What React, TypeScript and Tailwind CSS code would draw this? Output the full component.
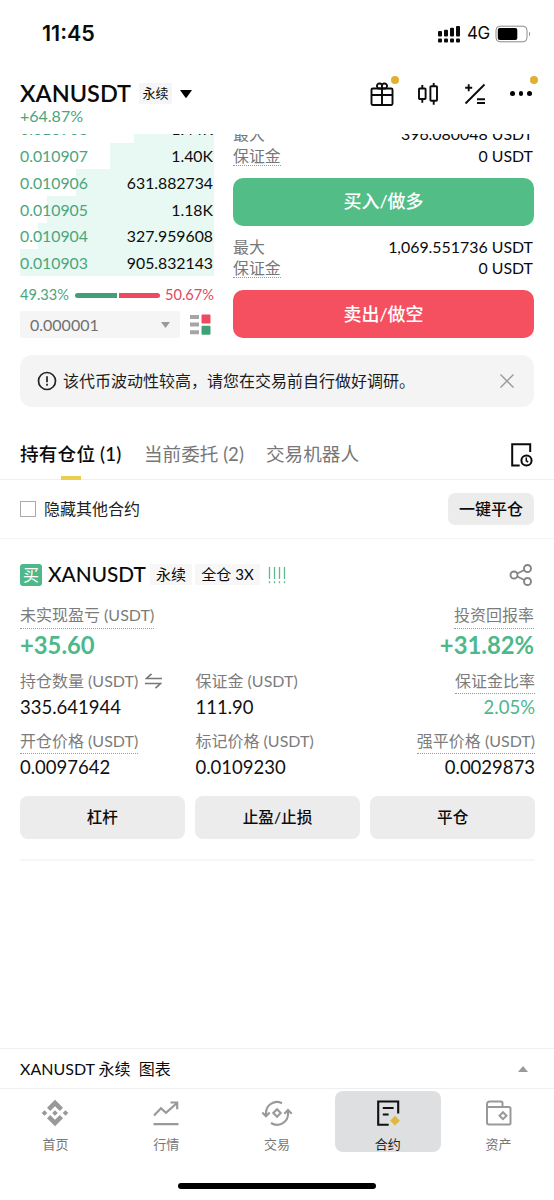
import React from "react";
import clsx from "clsx";

const bids = [
  { price: "0.010908", amount: "1.44K", bar: "w-[80px]" },
  { price: "0.010907", amount: "1.40K", bar: "w-[104px]" },
  { price: "0.010906", amount: "631.882734", bar: "w-[138px]" },
  { price: "0.010905", amount: "1.18K", bar: "w-[167px]" },
  { price: "0.010904", amount: "327.959608", bar: "w-[176px]" },
  { price: "0.010903", amount: "905.832143", bar: "w-[194px]" },
];

const giftIcon = (
  <svg width="26" height="26" viewBox="0 0 26 26" fill="none" stroke="#0b0b0b" strokeWidth="1.9">
    <rect x="2.5" y="7.5" width="21" height="16.5" rx="1.2" />
    <path d="M2.5 14h21M13 7.5V24" />
    <path d="M13 7.5H9.7a2.6 2.6 0 1 1 3.3-3.3 2.6 2.6 0 1 1 3.3 3.3H13V4.2" />
  </svg>
);

const candleIcon = (
  <svg width="22" height="24" viewBox="0 0 22 24" fill="none" stroke="#0b0b0b" strokeWidth="1.9">
    <rect x="2" y="6.5" width="6.6" height="10.5" rx="0.8" />
    <path d="M5.3 3v3.5M5.3 17v3.7" />
    <rect x="13.4" y="4.3" width="6.6" height="14.4" rx="0.8" />
    <path d="M16.7 1v3.3M16.7 18.7v4" />
  </svg>
);

const calcIcon = (
  <svg width="22" height="22" viewBox="0 0 22 22" fill="none" stroke="#0b0b0b" strokeWidth="1.9">
    <path d="M1.2 4.7h7M4.7 1.2v7M1.5 20.5 20.5 1.5M13 16.2h8M13 20h8" />
  </svg>
);

const homeIcon = (
  <svg width="28" height="28" viewBox="0 0 28 28" fill="#999">
    <path d="m14 .8 8 8-3.2 3.2-4.8-4.8L9.2 12 6 8.8zM14 27.2l8-8-3.2-3.2-4.8 4.8L9.2 16 6 19.2z" />
    <path d="m14 11.2 2.8 2.8-2.8 2.8-2.8-2.8zM3.5 11.2 6.3 14l-2.8 2.8L.7 14zM24.5 11.2l2.8 2.8-2.8 2.8-2.8-2.8z" />
  </svg>
);

const marketIcon = (
  <svg width="28" height="28" viewBox="0 0 28 28" fill="none" stroke="#999" strokeWidth="2.2">
    <path d="m2 16.5 7-7.3 5 4.6L25 4M18.5 3.5h6.7v6.7M1.5 25.2h25" />
  </svg>
);

const tradeIcon = (
  <svg width="32" height="28" viewBox="0 0 32 28" fill="none" stroke="#999" strokeWidth="2.1">
    <path d="M21 4.2A11 11 0 0 0 5 14v3M1.3 13.5 5 17.2l3.7-3.7" />
    <path d="M10 24a11 11 0 0 0 17-9.8v-3M23.3 14.7 27 11l3.7 3.7" />
    <path d="m16 10.3 3.7 3.7-3.7 3.7-3.7-3.7z" />
  </svg>
);

const futuresIcon = (
  <svg width="28" height="28" viewBox="0 0 28 28" fill="none" stroke="#111" strokeWidth="2.1">
    <path d="M24.2 14.5V2.5h-20v23.2h10.5M8.8 9h10.8M8.8 15.5h5.8" />
    <path d="m21 16.8 4.9 4.9-4.9 4.9-4.9-4.9z" fill="#e0b83a" stroke="none" />
  </svg>
);

const walletIcon = (
  <svg width="28" height="28" viewBox="0 0 28 28" fill="none" stroke="#999" strokeWidth="2">
    <path d="M17.5 8V4A1.5 1.5 0 0 0 16 2.5H4.5A2.5 2.5 0 0 0 2 5v18.5a2 2 0 0 0 2 2h20a1.5 1.5 0 0 0 1.5-1.5V9.5A1.5 1.5 0 0 0 24 8H2" />
    <path d="m18 13.2 3.5 3.5-3.5 3.5-3.5-3.5z" />
  </svg>
);

const navItems = [
  { label: "首页", icon: homeIcon, active: false },
  { label: "行情", icon: marketIcon, active: false },
  { label: "交易", icon: tradeIcon, active: false },
  { label: "合约", icon: futuresIcon, active: true },
  { label: "资产", icon: walletIcon, active: false },
];

const StatusBar: React.FC = () => (
  <div className="flex h-[67px] items-center justify-between pl-[42px] pr-[23px]">
    <p className="font-['Inter'] text-[21.5px] font-semibold leading-none">11:45</p>
    <div className="flex items-center">
      <svg width="24" height="18" viewBox="0 0 24 18" fill="#0b0b0b">
        <rect x="1" y="6" width="4" height="5.5" rx="1" />
        <rect x="7" y="4.7" width="4" height="6.8" rx="1" />
        <rect x="13" y="2.7" width="4" height="8.8" rx="1" />
        <rect x="19" y="1" width="4" height="10.5" rx="1" />
        <rect x="1" y="13.5" width="4" height="4" rx="1" />
        <rect x="7" y="13.5" width="4" height="4" rx="1" />
        <rect x="13" y="13.5" width="4" height="4" rx="1" />
        <rect x="19" y="13.5" width="4" height="4" rx="1" />
      </svg>
      <span className="ml-[6px] w-[22px] font-['Inter'] text-[17px] leading-none tracking-[-0.4px]">4G</span>
      <svg className="ml-[6px]" width="36" height="18" viewBox="0 0 36 18">
        <rect x="1" y="1.2" width="31" height="15.6" rx="4" fill="none" stroke="#8a8a8a" />
        <rect x="2.8" y="3" width="19.5" height="12" rx="2" fill="#000" />
        <path d="M34 6.8c1.3.5 1.3 3.9 0 4.4z" fill="#8a8a8a" />
      </svg>
    </div>
  </div>
);

const Header: React.FC = () => (
  <header className="h-[67px] px-5">
    <div className="flex h-[53px] items-center">
      <h1 className="w-[117px] whitespace-nowrap text-[23.5px] font-semibold leading-none">XANUSDT</h1>
      <span className="ml-[2px] flex h-[21px] w-[33px] items-center justify-center bg-[#f5f5f5] text-[13px]">
        永续
      </span>
      <svg className="ml-2" width="12" height="8" viewBox="0 0 12 8">
        <path d="M0 0h12L6.8 7.3a1 1 0 0 1-1.6 0z" />
      </svg>
      <div className="ml-auto flex items-center">
        <div className="relative -ml-px mr-px">
          {giftIcon}
          <i className="absolute -right-[4px] -top-[5px] size-2 rounded-full bg-[#e0b030]" />
        </div>
        <div className="ml-[21px] mr-px">{candleIcon}</div>
        <div className="ml-[24px] mr-px">{calcIcon}</div>
        <div className="relative ml-[23px] flex h-6 w-6 items-center gap-[4px]">
          <i className="size-[4.5px] rounded-full bg-black" />
          <i className="size-[4.5px] rounded-full bg-black" />
          <i className="size-[4.5px] rounded-full bg-black" />
          <i className="absolute -right-[4px] -top-[6px] size-2 rounded-full bg-[#e0b030]" />
        </div>
      </div>
    </div>
    <p className="-mt-[10px] text-[16px] leading-[12px] text-[#4aa57d]">+64.87%</p>
  </header>
);

const OrderBook: React.FC = () => (
  <div className="w-[194px]">
    <div className="-mt-[18px]">
      {bids.map((bid) => (
        <div key={bid.price} className="grid h-[26.7px] items-center">
          <div className={clsx("col-start-1 row-start-1 h-full justify-self-end bg-[#e8f8f2]", bid.bar)} />
          <div className="col-start-1 row-start-1 flex justify-between text-[15.8px] leading-none">
            <span className="text-[#4aa57d]">{bid.price}</span>
            <span className="pr-px">{bid.amount}</span>
          </div>
        </div>
      ))}
    </div>
    <div className="mt-[7px] flex h-6 items-center justify-between text-[14.6px] leading-none">
      <span className="text-[#4aa57d]">49.33%</span>
      <div className="flex gap-[2px]">
        <div className="h-[5px] w-[42px] rounded-l-full bg-[#42a078]" />
        <div className="h-[5px] w-[41px] rounded-r-full bg-[#ee4a5f]" />
      </div>
      <span className="text-[#e04861]">50.67%</span>
    </div>
    <div className="mt-[4px] flex items-center">
      <div className="flex h-[27px] w-[160px] items-center justify-between rounded-[2px] bg-[#f5f5f5] px-[10px] text-[16px] text-[#707070]">
        0.000001
        <svg width="9" height="6" viewBox="0 0 9 6" fill="#999">
          <path d="M0 0h9L4.5 6z" />
        </svg>
      </div>
      <svg className="ml-[10px]" width="21" height="21" viewBox="0 0 21 21">
        <path d="M0 1h9v4H0zM0 8.5h9v4H0zM0 16.2h9v4H0z" fill="#a5a5a5" />
        <rect x="11.5" y="0.5" width="9" height="9" rx="1" fill="#ee4a5f" />
        <rect x="11.5" y="11.7" width="9" height="9" rx="1" fill="#42a078" />
      </svg>
    </div>
  </div>
);

const OrderSide: React.FC<{ max: string; label: string; color: string }> = ({ max, label, color }) => (
  <div>
    <div className="flex h-[22px] items-center justify-between text-[15.9px] leading-none">
      <span className="text-[#777]">最大</span>
      <span className="pr-px">{max} USDT</span>
    </div>
    <div className="flex h-[21px] items-center justify-between text-[15.9px] leading-none">
      <span className="h-[20px] border-b border-dotted border-[#999] leading-[20px] text-[#777]">保证金</span>
      <span className="pr-px">0 USDT</span>
    </div>
    <button
      className={clsx(
        "mt-[11.5px] flex h-[48px] w-full items-center justify-center rounded-[10px] text-[18px] font-medium text-white",
        color
      )}
    >
      {label}
    </button>
  </div>
);

const Notice: React.FC = () => (
  <div className="mx-5 mt-4 flex h-[52px] items-center rounded-[12px] bg-[#f4f4f4] pl-[17px] pr-5">
    <svg width="20" height="20" viewBox="0 0 20 20" fill="none" stroke="#222" strokeWidth="1.7">
      <circle cx="10" cy="10" r="8.5" />
      <path d="M10 5.3v5.9M10 12.8v2" />
    </svg>
    <p className="ml-[6px] text-[16px] text-[#1c1c1c]">该代币波动性较高，请您在交易前自行做好调研。</p>
    <svg className="ml-auto" width="14" height="14" viewBox="0 0 14 14" stroke="#999" strokeWidth="1.4">
      <path d="M.5.5l13 13M13.5.5l-13 13" />
    </svg>
  </div>
);

const Tabs: React.FC = () => (
  <div className="mt-[23px] flex h-[50px] items-stretch border-b border-[#efefef] px-5 text-[18.6px]">
    <div className="relative flex h-[50px] w-[102px] items-center whitespace-nowrap font-medium tracking-[0.2px]">
      持有仓位 (1)
      <i className="absolute bottom-0 left-[41px] h-[4px] w-5 bg-[#ebce4b]" />
    </div>
    <div className="ml-[22px] flex w-[101px] items-center whitespace-nowrap text-[#777]">当前委托 (2)</div>
    <div className="ml-[21px] flex items-center whitespace-nowrap text-[#777]">交易机器人</div>
    <svg
      className="ml-auto self-center"
      width="24"
      height="26"
      viewBox="0 0 24 26"
      fill="none"
      stroke="#0b0b0b"
      strokeWidth="2"
    >
      <path d="M20.2 10V2.3h-18v21.2h7.5" />
      <circle cx="16.5" cy="18.5" r="5.1" />
      <path d="M16.3 15.6v3.2l1.9 1.2" strokeWidth="1.5" />
    </svg>
  </div>
);

interface CellProps {
  label: string;
  value: string;
  dotted?: boolean;
  right?: boolean;
  green?: boolean;
  icon?: React.ReactNode;
}

const Cell: React.FC<CellProps> = ({ label, value, dotted, right, green, icon }) => (
  <div className={clsx("flex h-[60px] flex-col", right ? "items-end" : "items-start")}>
    <div
      className={clsx(
        "flex h-[26px] items-center whitespace-nowrap border-b text-[16px] text-[#7c7c7c]",
        dotted ? "border-dotted border-[#999]" : "border-transparent"
      )}
    >
      {label}
      {icon}
    </div>
    <p className={clsx("text-[18.5px] leading-[26px]", green ? "text-[#4db68a]" : "text-[#111]")}>{value}</p>
  </div>
);

const Position: React.FC = () => (
  <section className="h-[509px] pl-5 pr-[19px]">
    <div className="flex h-[71px] items-center">
      <span className="flex size-[22px] items-center justify-center rounded-[3px] bg-[#4db98b] text-[16px] text-white">
        买
      </span>
      <h2 className="ml-[6px] w-[98px] whitespace-nowrap text-[20.8px] font-medium leading-none">XANUSDT</h2>
      <span className="ml-[4px] flex h-[21px] w-[42px] items-center justify-center bg-[#f7f7f7] text-[15px]">永续</span>
      <span className="ml-[3px] flex h-[21px] w-[65px] items-center justify-center whitespace-nowrap bg-[#f7f7f7] text-[15px]">
        全仓 3X
      </span>
      <svg className="ml-[8px]" width="18" height="18" viewBox="0 0 18 18" stroke="#62b893" strokeWidth="1.3">
        <path d="M1.5 1v12M6.5 1v12M11.5 1v12M16.5 1v12M1.5 15.3v2M6.5 15.3v2M11.5 15.3v2M16.5 15.3v2" />
      </svg>
      <svg
        className="ml-auto mr-[2px]"
        width="24"
        height="22"
        viewBox="0 0 24 22"
        fill="none"
        stroke="#858585"
        strokeWidth="1.9"
      >
        <circle cx="5" cy="11" r="3.5" />
        <circle cx="18.5" cy="4.5" r="3.5" />
        <circle cx="18.5" cy="17.5" r="3.5" />
        <path d="m8.2 9.5 7.2-3.5M8.2 12.5l7.2 3.5" />
      </svg>
    </div>
    <div className="-mt-[7px] flex justify-between">
      <div>
        <div className="inline-block h-[26px] border-b border-dotted border-[#999] text-[16px] leading-[24px] text-[#7c7c7c]">
          未实现盈亏 (USDT)
        </div>
        <p className="text-[23.8px] font-bold leading-[32px] text-[#4db98b]">+35.60</p>
      </div>
      <div className="pr-px text-right">
        <div className="inline-block h-[26px] border-b border-dotted border-[#999] text-[16px] leading-[24px] text-[#7c7c7c]">
          投资回报率
        </div>
        <p className="text-[23.8px] font-bold leading-[32px] text-[#4db98b]">+31.82%</p>
      </div>
    </div>
    <div className="mt-[7px] grid grid-cols-[175.5px_175.5px_1fr]">
      <Cell
        label="持仓数量 (USDT)"
        value="335.641944"
        icon={
          <svg className="ml-[7px]" width="17" height="16" viewBox="0 0 17 16" fill="none" stroke="#777" strokeWidth="1.6">
            <path d="M17 5.5H1.5l5-4.7M0 10.5h15.5l-5 4.7" />
          </svg>
        }
      />
      <Cell label="保证金 (USDT)" value="111.90" />
      <Cell label="保证金比率" value="2.05%" dotted right green />
      <Cell label="开仓价格 (USDT)" value="0.0097642" dotted />
      <Cell label="标记价格 (USDT)" value="0.0109230" />
      <Cell label="强平价格 (USDT)" value="0.0029873" dotted right />
    </div>
    <div className="mt-[8px] grid grid-cols-3 gap-[10.5px] text-[15.6px] font-medium">
      <button className="h-[43px] rounded-[8px] bg-[#ececec]">杠杆</button>
      <button className="h-[43px] rounded-[8px] bg-[#ececec]">止盈/止损</button>
      <button className="h-[43px] rounded-[8px] bg-[#ececec]">平仓</button>
    </div>
    <div className="mt-[20px] border-b-2 border-[#f6f6f6]" />
  </section>
);

const BottomNav: React.FC = () => (
  <nav className="flex h-[64px] border-t border-[#efefef] pt-[2px]">
    {navItems.map((item) => (
      <div key={item.label} className="flex flex-1 justify-center">
        <div
          className={clsx(
            "flex h-[61px] w-[106px] shrink-0 flex-col items-center pt-[8px]",
            item.active && "rounded-[8px] bg-[#dddfe1]"
          )}
        >
          {item.icon}
          <span className={clsx("mt-[9px] text-[13px] leading-[16px]", item.active ? "text-[#222]" : "text-[#777]")}>
            {item.label}
          </span>
        </div>
      </div>
    ))}
  </nav>
);

const App: React.FC = () => {
  return (
    <div className="flex h-[1200px] w-[554px] flex-col overflow-hidden bg-white font-['Lato','Noto_Sans_CJK_SC',sans-serif] text-[#0b0b0b]">
      <StatusBar />
      <Header />
      {/* order panel, scrolled a little under the header */}
      <div className="flex h-[205px] justify-between overflow-hidden px-5">
        <OrderBook />
        <div className="-mt-[11px] w-[301px]">
          <OrderSide max="396.080048" label="买入/做多" color="bg-[#53bd87]" />
          <div className="h-[10px]" />
          <OrderSide max="1,069.551736" label="卖出/做空" color="bg-[#f4505f]" />
        </div>
      </div>
      <Notice />
      <Tabs />
      <div className="flex h-[59px] items-center border-b border-[#f4f4f4] px-5">
        <div className="size-4 border border-[#aaa]" />
        <span className="ml-[8px] text-[16px] text-[#222]">隐藏其他合约</span>
        <button className="ml-auto h-8 w-[86px] rounded-[7px] bg-[#ececec] text-[16px] font-medium">一键平仓</button>
      </div>
      <Position />
      <div className="flex h-[40px] items-center justify-between border-t border-[#efefef] pl-5 pr-[26px] text-[16px]">
        <p className="whitespace-pre">XANUSDT 永续  图表</p>
        <svg width="10" height="6" viewBox="0 0 10 6" fill="#999">
          <path d="M5 0l5 6H0z" />
        </svg>
      </div>
      <BottomNav />
      <div className="mt-[31px] h-[6px] w-[198px] self-center rounded-full bg-black" />
    </div>
  );
};

export default App;
